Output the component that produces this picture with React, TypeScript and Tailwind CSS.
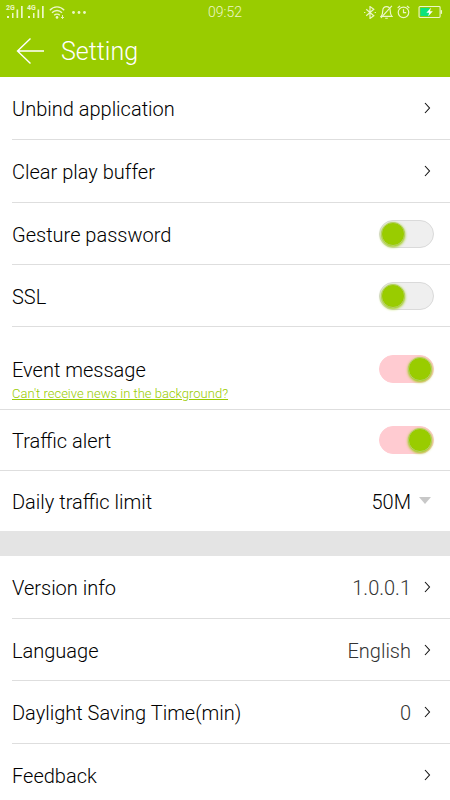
import { useState } from 'react';
import type { ReactNode } from 'react';
import clsx from 'clsx';

function Signal({ label }: { label: string }) {
  return (
    <div className="relative h-3 w-4">
      <span className="absolute -left-px -top-px text-[7px] leading-[7px] font-bold">{label}</span>
      <svg className="block" width="16" height="12" viewBox="0 0 16 12" fill="currentColor" aria-hidden="true">
        <rect x="0" y="10" width="2" height="2" />
        <rect x="5" y="7" width="1.5" height="5" />
        <rect x="9.5" y="3.5" width="1.7" height="8.5" />
        <rect x="14" y="0" width="1.7" height="12" />
      </svg>
    </div>
  );
}

function Wifi() {
  return (
    <svg width="16" height="13" viewBox="0 0 16 13" fill="none" stroke="currentColor" strokeWidth="1.3" aria-hidden="true">
      <path d="M0.8 4.2C4.8 -0.2 11.2 -0.2 15.2 4.2" />
      <path d="M3 6.8C5.8 3.7 10.2 3.7 13 6.8" />
      <path d="M5.2 9.3C6.8 7.6 9.2 7.6 10.8 9.3" />
      <circle cx="8" cy="11.4" r="1.3" fill="currentColor" stroke="none" />
      <path d="M13.5 9v3.5M12 11l1.5 1.5L15 11" strokeWidth="0.9" />
    </svg>
  );
}

function Bluetooth() {
  return (
    <svg width="12" height="13" viewBox="0 0 11 12" fill="none" stroke="currentColor" strokeWidth="1.1" aria-hidden="true">
      <path d="M2 3l7 6-3.5 2.5v-11L9 3 2 9" />
      <path d="M0 6h1.2M9.8 6H11" />
    </svg>
  );
}

function MutedBell() {
  return (
    <svg width="13" height="14" viewBox="0 0 12 13" fill="none" stroke="currentColor" strokeWidth="1.1" aria-hidden="true">
      <path d="M1 10.5h10C9.5 9 9.5 7.5 9.5 5.5 9.5 3 8 1.5 6 1.5S2.5 3 2.5 5.5C2.5 7.5 2.5 9 1 10.5z" />
      <path d="M4.8 12.3h2.4M0.8 12L11 0.8" />
    </svg>
  );
}

function Alarm() {
  return (
    <svg width="13" height="14" viewBox="0 0 12 13" fill="none" stroke="currentColor" strokeWidth="1.1" aria-hidden="true">
      <circle cx="6" cy="6.8" r="4.9" />
      <path d="M6 4v3h2.5M0.6 2.8L2.8 0.8M11.4 2.8L9.2 0.8" />
    </svg>
  );
}

function Battery() {
  return (
    <svg width="25" height="12" viewBox="0 0 26 13" aria-hidden="true">
      <rect x="0.6" y="0.6" width="22.8" height="11.8" rx="1" fill="none" stroke="#ecf7c8" strokeWidth="1.2" />
      <rect x="2" y="2" width="10" height="9" fill="#0be37c" />
      <path d="M24 4.5h1.5v4H24z" fill="#ecf7c8" />
      <path d="M13.5 2L8.5 7.2h3L10.5 11l5-5.2h-3z" fill="#fff" />
    </svg>
  );
}

function Chevron() {
  return (
    <svg className="mb-0.5 ml-3" width="8" height="12" viewBox="0 0 8 12" fill="none" stroke="#111" strokeWidth="1.1" aria-hidden="true">
      <path d="M2 1l4.5 5L2 11" />
    </svg>
  );
}

function Toggle({ id, defaultOn = false }: { id: string; defaultOn?: boolean }) {
  const [on, setOn] = useState(defaultOn);

  return (
    <input
      id={id}
      type="checkbox"
      checked={on}
      onChange={(e) => setOn(e.target.checked)}
      className={clsx(
        'mr-1 mb-0.5 flex h-7 w-[55px] shrink-0 cursor-pointer appearance-none items-center rounded-full border px-px',
        "before:block before:size-6 before:rounded-full before:border before:border-[#b5cf6a] before:bg-[#99cc00] before:shadow-[0_1px_3px_#99cc00] before:content-['']",
        on ? 'justify-end border-[#ffcbd1] bg-[#ffcbd1]' : 'justify-start border-[#dadada] bg-[#efefef]'
      )}
    />
  );
}

function LinkRow({ label, value, className }: { label: string; value?: string; className?: string }) {
  return (
    <li className={clsx('ml-3 border-b border-[#dedede]', className)}>
      <button type="button" className="flex h-full w-full items-center pt-0.5 pr-[19px] text-left">
        <span className="flex-1">{label}</span>
        {value && <span className="text-[#333]">{value}</span>}
        <Chevron />
      </button>
    </li>
  );
}

function ControlRow({ className, children }: { className?: string; children: ReactNode }) {
  return <li className={clsx('flex items-center justify-between pt-0.5 pr-3', className)}>{children}</li>;
}

export default function App() {
  return (
    <div className="min-h-screen overflow-hidden bg-white font-['Roboto',sans-serif] text-xl font-light text-black">
      <header className="h-[77px] bg-[#99cc00] text-white">
        <div className="grid h-6 grid-cols-3 items-center px-[7px] text-[#ecf7c8]">
          <div className="flex items-center gap-[5px]">
            <Signal label="2G" />
            <Signal label="4G" />
            <Wifi />
            <svg className="ml-0.5" width="14" height="3" viewBox="0 0 14 3" fill="currentColor" aria-hidden="true">
              <circle cx="1.5" cy="1.5" r="1.4" />
              <circle cx="7" cy="1.5" r="1.4" />
              <circle cx="12.5" cy="1.5" r="1.4" />
            </svg>
          </div>
          <time className="text-center text-sm">09:52</time>
          <div className="flex items-center justify-end gap-1">
            <Bluetooth />
            <MutedBell />
            <Alarm />
            <span className="ml-1">
              <Battery />
            </span>
          </div>
        </div>
        <div className="flex h-[53px] items-center pl-4">
          <button type="button" aria-label="Back">
            <svg width="28" height="28" viewBox="0 0 28 28" fill="none" stroke="currentColor" strokeWidth="1.4">
              <path d="M14.5 1.5L1.5 14l13 12.5M1.5 14H28" />
            </svg>
          </button>
          <h1 className="ml-[17px] pt-0.5 text-[25px] font-light">Setting</h1>
        </div>
      </header>

      <ul>
        <LinkRow label="Unbind application" className="h-[63px]" />
        <LinkRow label="Clear play buffer" className="h-[63px]" />
        <ControlRow className="ml-3 h-[62px] border-b border-[#dedede]">
          <label htmlFor="gesture">Gesture password</label>
          <Toggle id="gesture" />
        </ControlRow>
        <ControlRow className="ml-3 h-[62px] border-b border-[#dedede]">
          <label htmlFor="ssl">SSL</label>
          <Toggle id="ssl" />
        </ControlRow>
        <li className="h-[83px] border-b border-[#dedede] pt-7 pr-3 pl-3">
          <div className="flex h-[29px] items-center justify-between">
            <label htmlFor="event">Event message</label>
            <Toggle id="event" defaultOn />
          </div>
          <a href="#background-news" className="block text-[13px] leading-5 text-[#99cc00] underline">
            Can't receive news in the background?
          </a>
        </li>
        <ControlRow className="h-[61px] border-b border-[#dedede] pl-3">
          <label htmlFor="traffic">Traffic alert</label>
          <Toggle id="traffic" defaultOn />
        </ControlRow>
        <ControlRow className="h-[60px] pl-3">
          <label htmlFor="limit">Daily traffic limit</label>
          <div className="flex items-center">
            <select id="limit" defaultValue="50M" className="cursor-pointer appearance-none text-right">
              <option>10M</option>
              <option>50M</option>
              <option>100M</option>
            </select>
            <svg className="mr-[7px] mb-1 ml-2" width="12" height="7" viewBox="0 0 12 7" fill="#c8c8c8" aria-hidden="true">
              <path d="M0 0h12L6 7z" />
            </svg>
          </div>
        </ControlRow>
      </ul>

      <div className="h-[25px] bg-[#e4e4e4]" />

      <ul>
        <LinkRow label="Version info" value="1.0.0.1" className="h-[63px]" />
        <LinkRow label="Language" value="English" className="h-[62px]" />
        <LinkRow label="Daylight Saving Time(min)" value="0" className="h-[63px]" />
        <LinkRow label="Feedback" className="h-[62px]" />
      </ul>
    </div>
  );
}
